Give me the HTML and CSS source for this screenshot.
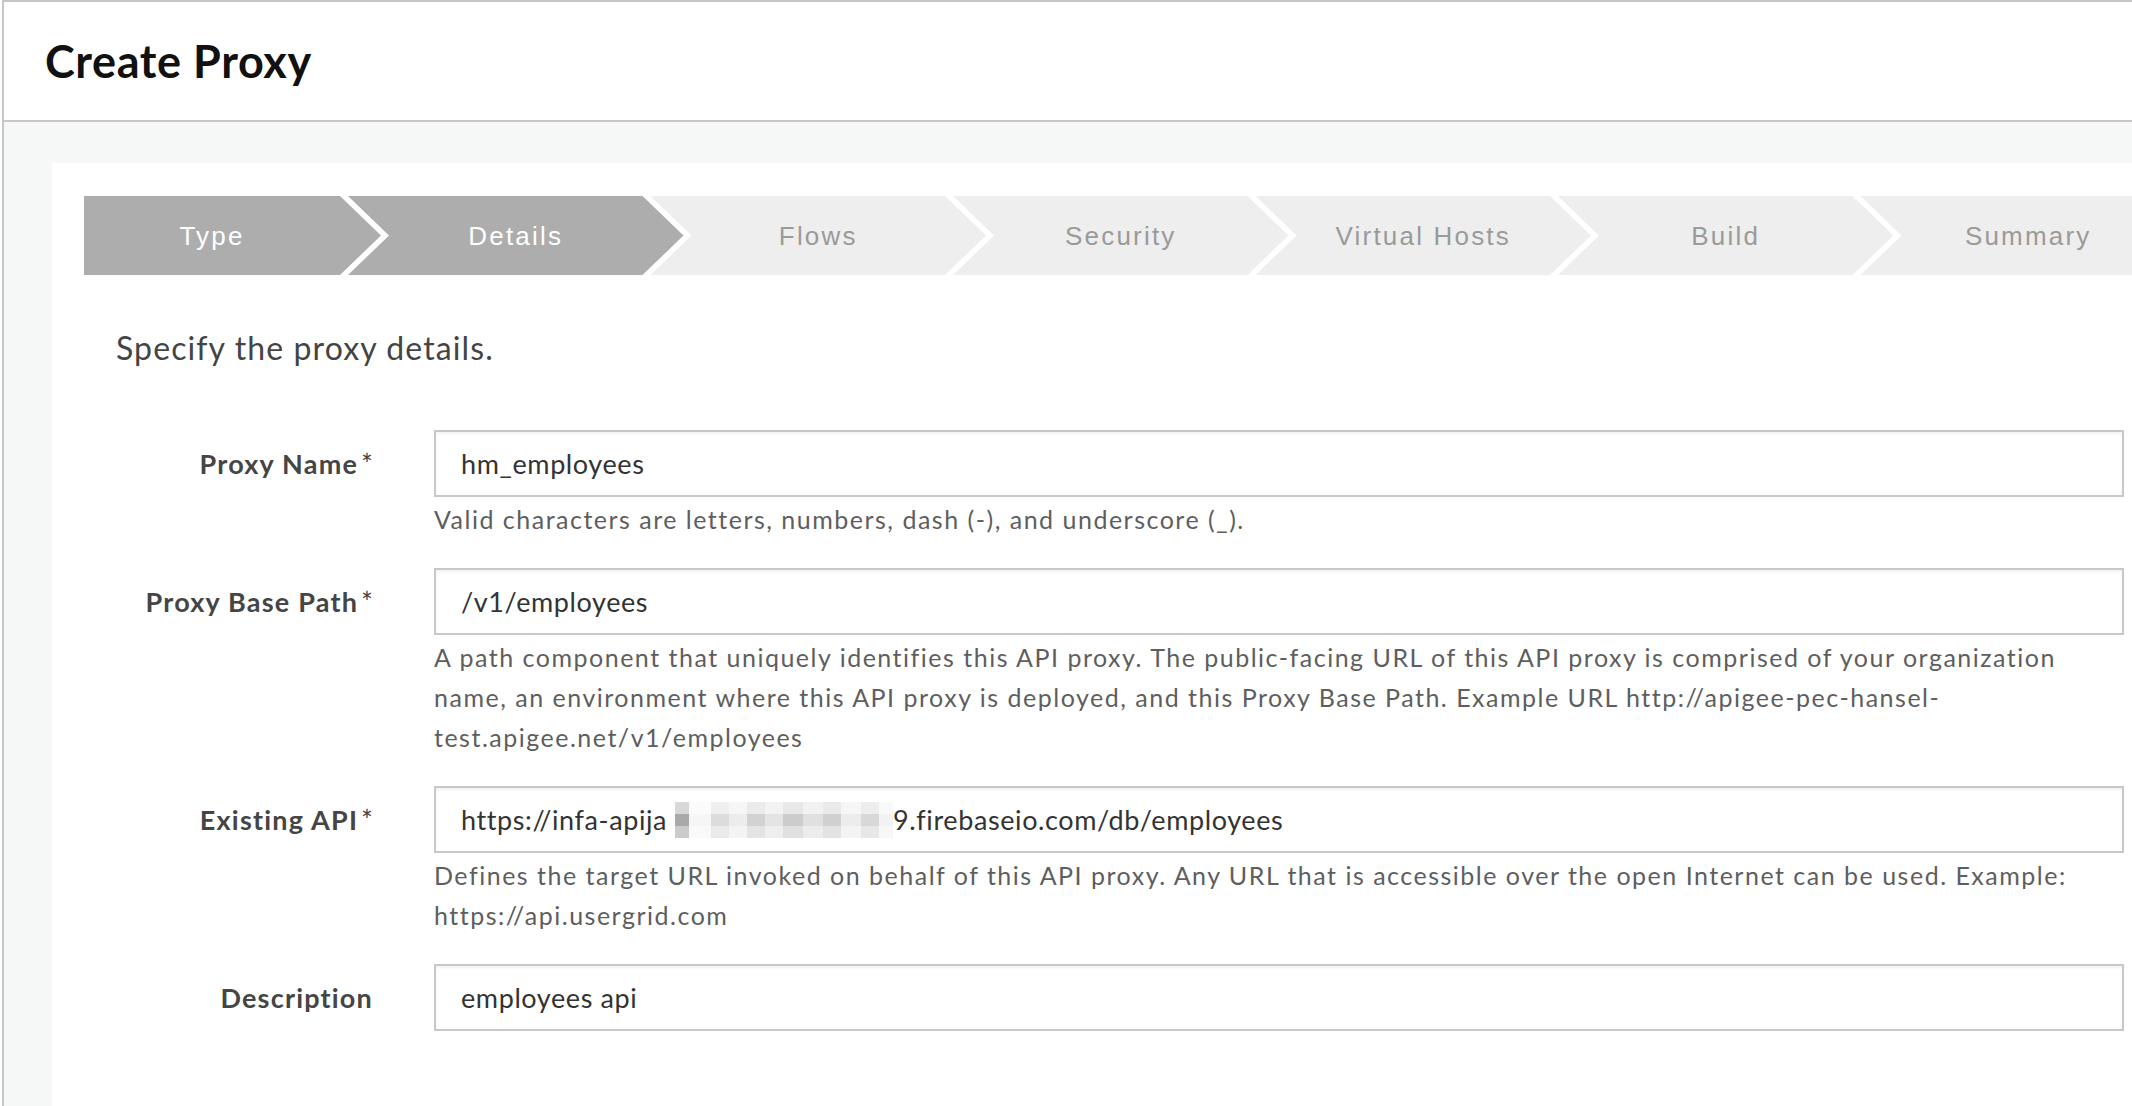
FILE: index.html
```html
<!DOCTYPE html>
<html lang="en">
<head>
<meta charset="utf-8">
<title>Create Proxy</title>
<link rel="stylesheet" href="styles.css">
</head>
<body>
<div class="page">
  <header class="header">
    <h1 class="title">Create Proxy</h1>
  </header>
  <main class="main">
    <section class="card">
      <ol class="steps">
        <li class="step step-first is-done">Type</li>
        <li class="step is-done">Details</li>
        <li class="step">Flows</li>
        <li class="step">Security</li>
        <li class="step">Virtual Hosts</li>
        <li class="step">Build</li>
        <li class="step">Summary</li>
      </ol>
      <p class="intro">Specify the proxy details.</p>
      <div class="form">
        <div class="row">
          <div class="label">Proxy Name<span class="req">*</span></div>
          <div class="field">
            <div class="input">hm_employees</div>
            <p class="help">Valid characters are letters, numbers, dash (-), and underscore (_).</p>
          </div>
        </div>
        <div class="row">
          <div class="label">Proxy Base Path<span class="req">*</span></div>
          <div class="field">
            <div class="input">/v1/employees</div>
            <p class="help">A path component that uniquely identifies this API proxy. The public-facing URL of this API proxy is comprised of your organization name, an environment where this API proxy is deployed, and this Proxy Base Path. Example URL http://apigee-pec-hansel-test.apigee.net/v1/employees</p>
          </div>
        </div>
        <div class="row">
          <div class="label">Existing API<span class="req">*</span></div>
          <div class="field">
            <div class="input">https://infa-apija<span class="redact"></span>9.firebaseio.com/db/employees</div>
            <p class="help">Defines the target URL invoked on behalf of this API proxy. Any URL that is accessible over the open Internet can be used. Example: https://api.usergrid.com</p>
          </div>
        </div>
        <div class="row">
          <div class="label">Description</div>
          <div class="field">
            <div class="input">employees api</div>
          </div>
        </div>
      </div>
    </section>
  </main>
</div>
</body>
</html>
```
FILE: styles.css
```css
html, body {
  margin: 0;
  padding: 0;
  height: 100%;
  overflow: hidden;
  background: #ffffff;
  font-family: Lato, "Open Sans", "Liberation Sans", sans-serif;
}

.page {
  margin-left: 2px;
  border-left: 2px solid #c6c6c6;
  border-top: 2px solid #c6c6c6;
  height: calc(100% - 2px);
  display: flex;
  flex-direction: column;
}

.header {
  height: 118px;
  border-bottom: 2px solid #c6c6c6;
  background: #ffffff;
  flex-shrink: 0;
}

.title {
  margin: 0;
  padding: 37px 0 0 41px;
  font-size: 45px;
  line-height: 45px;
  font-weight: 700;
  letter-spacing: 0.6px;
  color: #111111;
}

.main {
  flex: 1;
  background: #f6f7f7;
  padding: 41px 0 0 48px;
  display: flex;
}

.card {
  flex: 1;
  background: #ffffff;
  padding: 33px 0 0 32px;
  min-width: 0;
}

.steps {
  list-style: none;
  margin: 0;
  padding: 0;
  display: flex;
  height: 79px;
  overflow: hidden;
}

.step {
  flex-shrink: 0;
  width: 335.5px;
  margin-left: -33px;
  height: 79px;
  line-height: 80px;
  text-align: center;
  background: #eeeeee;
  color: #9a9a9a;
  font-family: "Liberation Sans", Arial, sans-serif;
  font-size: 26px;
  letter-spacing: 2.2px;
  clip-path: polygon(0 0, calc(100% - 41px) 0, 100% 50%, calc(100% - 41px) 100%, 0 100%, 41px 50%);
}

.step-first {
  width: 297px;
  margin-left: 0;
  padding-right: 41px;
  box-sizing: border-box;
  clip-path: polygon(0 0, calc(100% - 41px) 0, 100% 50%, calc(100% - 41px) 100%, 0 100%);
}

.step.is-done {
  background: #adadad;
  color: #ffffff;
}

.intro {
  margin: 55px 0 0 32px;
  font-size: 32px;
  line-height: 36px;
  letter-spacing: 1.1px;
  color: #444444;
}

.form {
  margin-top: 64px;
}

.row {
  display: grid;
  grid-template-columns: 289px 1690px;
  column-gap: 61px;
  margin-bottom: 29px;
}

.label {
  height: 67px;
  display: flex;
  align-items: center;
  justify-content: flex-end;
  font-size: 27px;
  font-weight: 700;
  letter-spacing: 1.2px;
  color: #454545;
}

.req {
  font-size: 28px;
  font-weight: 400;
  margin-left: 3px;
  letter-spacing: 0;
}

.input {
  height: 67px;
  box-sizing: border-box;
  border: 2px solid #c8c8c8;
  box-shadow: inset 0 2px 3px rgba(0, 0, 0, 0.05);
  padding-left: 25px;
  display: flex;
  align-items: center;
  font-size: 27px;
  letter-spacing: 0.6px;
  color: #333333;
  white-space: nowrap;
}

.redact {
  display: inline-block;
  width: 226px;
  height: 36px;
  background:
    linear-gradient(to right, #ffffff 0 8px, rgba(255,255,255,0) 8px),
    linear-gradient(to bottom, rgba(255,255,255,0.55) 0 12px, rgba(255,255,255,0) 12px 24px, rgba(255,255,255,0.4) 24px),
    linear-gradient(to right, #ffffff 0 8px, #a9a9a9 8px 22px, #f6f6f6 22px 44px, #dcdcdc 44px 62px, #ececec 62px 80px, #d2d2d2 80px 98px, #e4e4e4 98px 116px, #cccccc 116px 136px, #e0e0e0 136px 156px, #d0d0d0 156px 174px, #ececec 174px 194px, #d8d8d8 194px 212px, #f2f2f2 212px 226px);
}

.help {
  margin: 2px 0 0;
  font-size: 25px;
  line-height: 40px;
  letter-spacing: 1.5px;
  color: #5e5e5e;
}
```
